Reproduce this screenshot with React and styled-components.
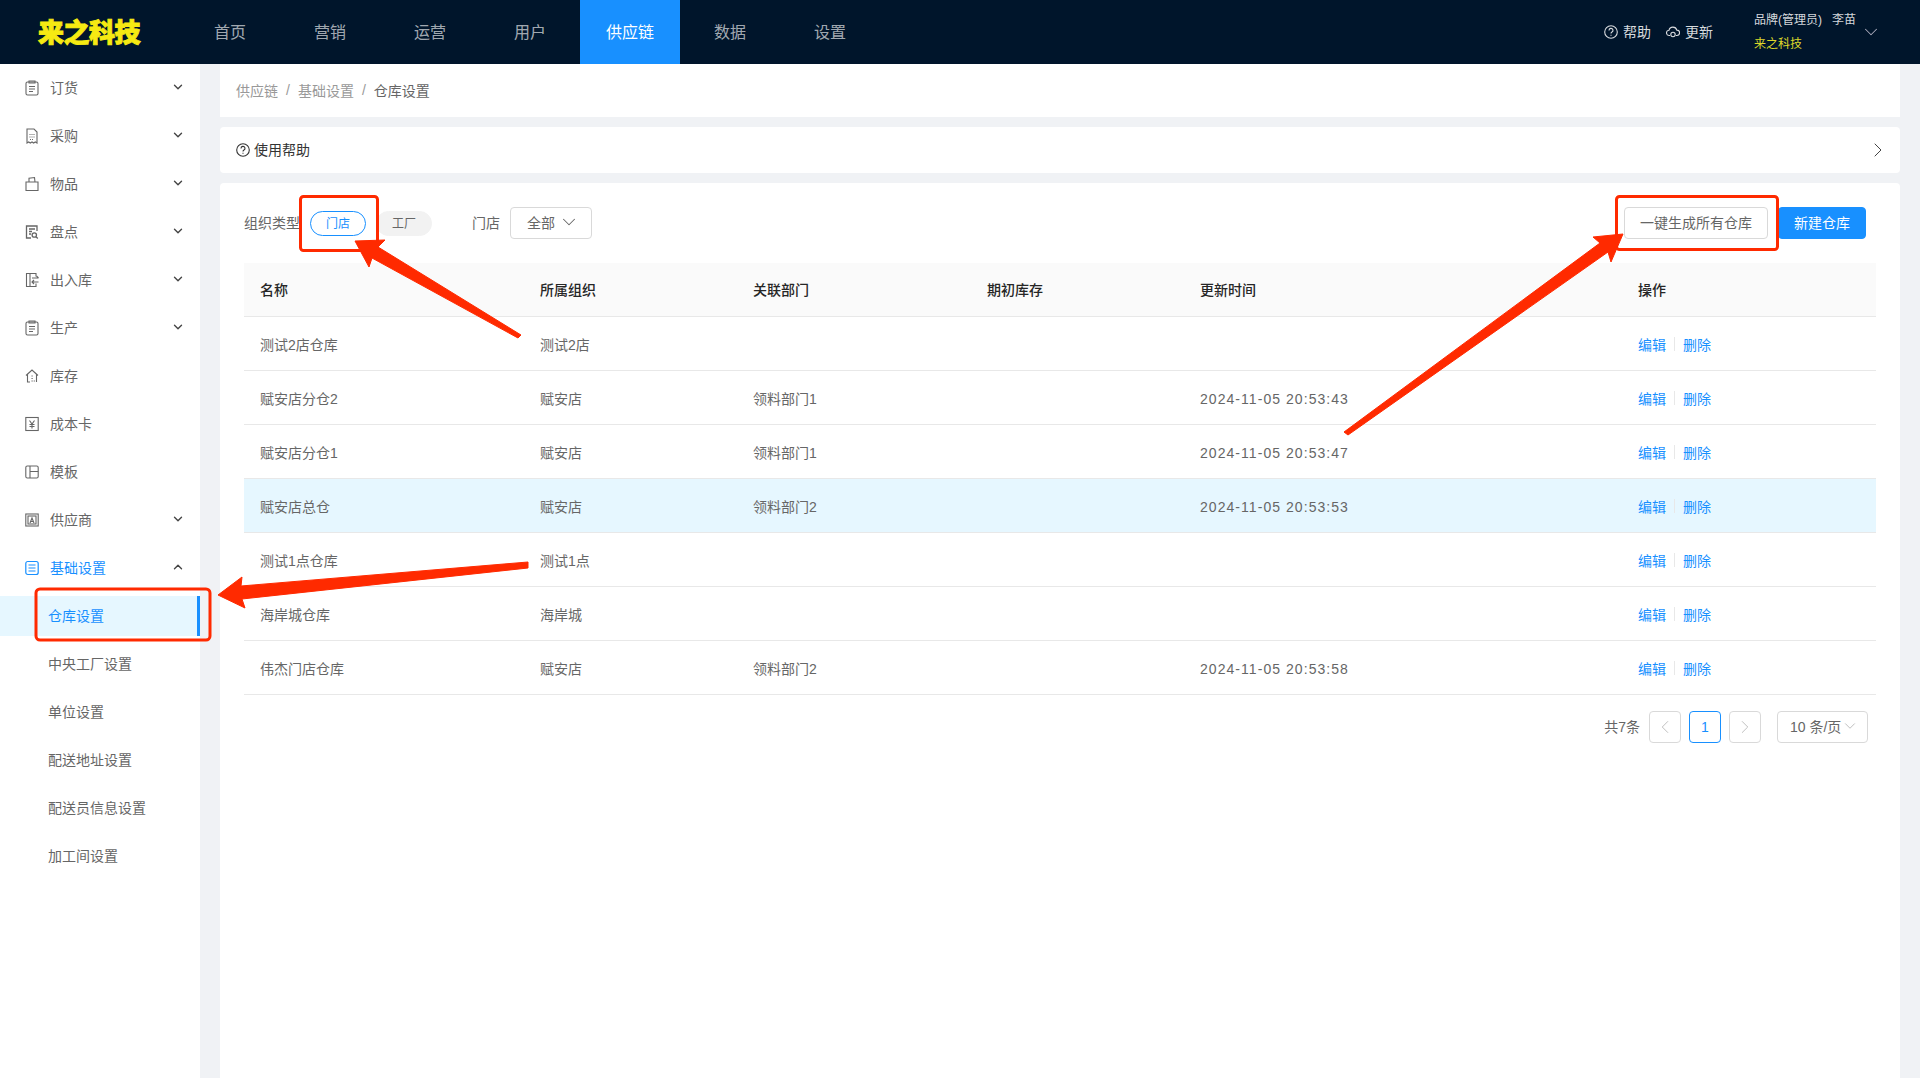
import React from 'react'
import styled, { createGlobalStyle } from 'styled-components'
import { ChevronDown, ChevronUp, ChevronLeft, ChevronRight } from 'lucide-react'

const GlobalStyle = createGlobalStyle`
  * { box-sizing: border-box; }
  html, body { margin: 0; padding: 0; height: 100%; }
  body {
    font-family: "Liberation Sans", "Noto Sans CJK SC", sans-serif;
    font-size: 14px;
    background: #f0f2f5;
  }
`

const Page = styled.div`
  position: relative;
  height: 100vh;
  overflow: hidden;
  display: flex;
  flex-direction: column;
`
const Header = styled.header`
  height: 64px;
  flex: none;
  display: flex;
  align-items: stretch;
  background: #00152b;
`
const Logo = styled.div`
  width: 180px;
  padding: 0 0 3px 38px;
  display: flex;
  align-items: center;
  font-size: 26px;
  font-weight: 900;
  letter-spacing: -0.5px;
  color: #f6ea12;
  -webkit-text-stroke: 0.9px #f6ea12;
`
const NavItem = styled.div`
  width: 100px;
  padding-bottom: 2px;
  display: flex;
  align-items: center;
  justify-content: center;
  font-size: 16px;
  color: ${p => (p.$active ? '#fff' : 'rgba(255,255,255,.65)')};
  background: ${p => (p.$active ? '#1890ff' : 'transparent')};
`
const HeaderRight = styled.div`
  margin-left: auto;
  padding-right: 38px;
  display: flex;
  align-items: center;
  color: rgba(255,255,255,.85);
`
const HeaderLink = styled.div`
  display: flex;
  align-items: center;
  gap: 5px;
  margin-right: 15px;
  padding-bottom: 2px;
  svg { width: 14px; height: 14px; margin-top: 2px; }
`
const User = styled.div`
  margin-left: 26px;
  margin-right: 4px;
  font-size: 12px;
  display: flex;
  flex-direction: column;
  gap: 7px;
  line-height: 17px;
`
const UserName = styled.span`
  display: flex;
  gap: 10px;
`
const Brand = styled.span`
  color: #dcd52a;
`
const Body = styled.div`
  flex: 1;
  display: flex;
  min-height: 0;
`
const Sidebar = styled.aside`
  width: 200px;
  flex: none;
  display: flex;
  flex-direction: column;
  background: #fff;
`
const MenuItem = styled.div`
  height: 48px;
  flex: none;
  padding: 0 15px 2px 25px;
  display: flex;
  align-items: center;
  color: ${p => (p.$open ? '#1890ff' : '#666')};
  svg.icon { width: 14px; height: 16px; margin: 2px 11px 0 0; flex: none; }
  svg.arrow { margin-left: auto; color: #444; }
`
const SubItem = styled.div`
  height: 40px;
  flex: none;
  margin: 4px 0;
  padding: 0 0 2px 48px;
  display: flex;
  align-items: center;
  color: ${p => (p.$active ? '#1890ff' : '#666')};
  background: ${p => (p.$active ? '#e6f7ff' : 'transparent')};
  border-right: ${p => (p.$active ? '3px solid #1890ff' : 'none')};
`
const Main = styled.main`
  flex: 1;
  min-width: 0;
  padding: 0 20px;
  display: flex;
  flex-direction: column;
  gap: 10px;
`
const Breadcrumb = styled.div`
  height: 53px;
  flex: none;
  padding: 0 0 1px 16px;
  display: flex;
  align-items: center;
  background: #fff;
  color: #999;
`
const Sep = styled.span`
  margin: 0 8px;
`
const Current = styled.span`
  color: #666;
`
const HelpBar = styled.div`
  height: 46px;
  flex: none;
  padding: 0 10px 2px 16px;
  display: flex;
  align-items: center;
  gap: 4px;
  background: #fff;
  border-radius: 4px;
  color: #333;
  svg.help { width: 14px; height: 14px; margin-top: 2px; }
  svg.more { margin: 2px 0 0 auto; color: #444; }
`
const Card = styled.section`
  flex: 1;
  padding: 24px;
  background: #fff;
  border-radius: 4px 4px 0 0;
`
const Toolbar = styled.div`
  height: 32px;
  margin-bottom: 24px;
  padding-right: 10px;
  display: flex;
  align-items: center;
  color: #666;
`
const Pill = styled.div`
  width: 56px;
  height: 25px;
  margin-right: 10px;
  padding-bottom: 1px;
  display: flex;
  align-items: center;
  justify-content: center;
  font-size: 12px;
  border-radius: 13px;
  color: ${p => (p.$active ? '#1890ff' : '#666')};
  background: ${p => (p.$active ? '#fff' : '#f2f2f2')};
  border: 1px solid ${p => (p.$active ? '#1890ff' : '#f2f2f2')};
`
const FilterLabel = styled.span`
  margin: -2px 10px 0 ${p => p.$gap || 0}px;
`
const Select = styled.div`
  width: ${p => p.$width}px;
  height: 32px;
  padding: 0 0 2px ${p => p.$pad}px;
  display: flex;
  align-items: center;
  gap: ${p => p.$gap}px;
  border: 1px solid #d9d9d9;
  border-radius: 4px;
  color: #666;
`
const Button = styled.div`
  height: 32px;
  padding-bottom: 2px;
  display: flex;
  align-items: center;
  justify-content: center;
  width: ${p => p.$width}px;
  margin-left: ${p => p.$left};
  border-radius: 4px;
  color: ${p => (p.$primary ? '#fff' : '#666')};
  background: ${p => (p.$primary ? '#1890ff' : '#fff')};
  border: 1px solid ${p => (p.$primary ? '#1890ff' : '#d9d9d9')};
`
const Table = styled.div`
  display: flex;
  flex-direction: column;
`
const Row = styled.div`
  height: 54px;
  padding-bottom: ${p => (p.$head ? '2px' : '0')};
  display: grid;
  grid-template-columns: 280px 213px 234px 213px 438px 254px;
  align-items: center;
  border-bottom: 1px solid #e8e8e8;
  color: ${p => (p.$head ? '#262626' : '#666')};
  font-weight: ${p => (p.$head ? 500 : 400)};
  background: ${p => (p.$head ? '#fafafa' : p.$selected ? '#e6f7ff' : '#fff')};
`
const Cell = styled.div`
  padding-left: 16px;
`
const TimeCell = styled(Cell)`
  padding-top: 2px;
  letter-spacing: 1.05px;
`
const Actions = styled.div`
  padding-left: 16px;
  display: flex;
  align-items: center;
  color: #1890ff;
`
const ActionSep = styled.i`
  width: 1px;
  height: 14px;
  margin: 0 8px;
  background: #e8e8e8;
`
const Pagination = styled.div`
  margin-top: 16px;
  padding-right: 8px;
  display: flex;
  justify-content: flex-end;
  align-items: center;
  color: #666;
`
const Total = styled.span`
  margin: -2px 9px 0 0;
`
const PageBtn = styled.div`
  width: 32px;
  height: 32px;
  margin-right: ${p => p.$gap}px;
  display: flex;
  align-items: center;
  justify-content: center;
  border-radius: 4px;
  border: 1px solid ${p => (p.$active ? '#1890ff' : '#d9d9d9')};
  color: ${p => (p.$active ? '#1890ff' : '#bbb')};
`
const Annotations = styled.svg`
  position: absolute;
  left: 0;
  top: 0;
  pointer-events: none;
`

const line = { fill: 'none', stroke: 'currentColor', strokeWidth: 1.1 }

const Clip = () => (
  <g {...line}>
    <rect x="1" y="2" width="12" height="13" rx="1.5" />
    <path d="M4 1h6v2H4zM4 6.5h6M4 9h6M4 11.5h4" />
  </g>
)
const icons = {
  clip: <Clip />,
  receipt: (
    <g {...line}>
      <path d="M2 1h7l3 3v11l-1.7-1-1.7 1-1.6-1-1.7 1-1.6-1L2 15z" />
      <path d="M4.5 6.5h5M4.5 9h5M5 11.5h4" strokeDasharray="1 1" />
    </g>
  ),
  bag: (
    <g {...line}>
      <path d="M1 6h12v8.5H1zM4 6V2.2L9.5 1.5 10 6" />
    </g>
  ),
  audit: (
    <g {...line} strokeWidth="1.3">
      <path d="M12 7V2H1.5v12H6" />
      <path d="M4 5h6M4 7.5h3M4 10h2" />
      <circle cx="9.3" cy="11" r="2.2" />
      <path d="M11 12.8l1.8 1.7" />
    </g>
  ),
  inout: (
    <g {...line}>
      <path d="M11 4.5V1.5H1.5v13H11v-3" />
      <path d="M5 1.5v13M7 6h6.5M11.5 4l2 2M13.5 10H7M9 8l-2 2 2 2" />
    </g>
  ),
  house: (
    <g {...line}>
      <path d="M1 7.5 7 2l6 5.5M2.5 6.5V14h2.5M11.5 6.5V14" />
      <path d="M6.5 8h1.5M6.5 10.5h1.5M6.5 13h4" strokeDasharray="1.2 1" />
    </g>
  ),
  yen: (
    <g {...line}>
      <rect x="0.8" y="1.5" width="12.4" height="13" />
      <path d="M4.5 4.5 7 8l2.5-3.5M7 8v4.5M4.5 8.5h5M4.5 10.5h5" />
    </g>
  ),
  layout: (
    <g {...line}>
      <rect x="0.8" y="2" width="12.4" height="12" rx="1.5" />
      <path d="M5 2v12M5 7.5h8.2" />
    </g>
  ),
  supplier: (
    <g {...line}>
      <rect x="0.8" y="2" width="12.4" height="12" />
      <rect x="3" y="4" width="8" height="8" />
      <path d="M5 11l2-5 2 5M5.5 9.5h3" />
    </g>
  ),
  list: (
    <g {...line} strokeWidth="1.2">
      <rect x="0.8" y="1.5" width="12.4" height="13" rx="2" />
      <path d="M3.5 5h7M3.5 8h7M3.5 11h7" />
    </g>
  ),
}

const menu = [
  ['订货', 'clip', true],
  ['采购', 'receipt', true],
  ['物品', 'bag', true],
  ['盘点', 'audit', true],
  ['出入库', 'inout', true],
  ['生产', 'clip', true],
  ['库存', 'house', false],
  ['成本卡', 'yen', false],
  ['模板', 'layout', false],
  ['供应商', 'supplier', true],
]
const subMenu = ['仓库设置', '中央工厂设置', '单位设置', '配送地址设置', '配送员信息设置', '加工间设置']
const navs = ['首页', '营销', '运营', '用户', '供应链', '数据', '设置']
const columns = ['名称', '所属组织', '关联部门', '期初库存', '更新时间', '操作']
const rows = [
  ['测试2店仓库', '测试2店', '', ''],
  ['赋安店分仓2', '赋安店', '领料部门1', '2024-11-05 20:53:43'],
  ['赋安店分仓1', '赋安店', '领料部门1', '2024-11-05 20:53:47'],
  ['赋安店总仓', '赋安店', '领料部门2', '2024-11-05 20:53:53'],
  ['测试1点仓库', '测试1点', '', ''],
  ['海岸城仓库', '海岸城', '', ''],
  ['伟杰门店仓库', '赋安店', '领料部门2', '2024-11-05 20:53:58'],
]

const HelpIcon = ({ className }) => (
  <svg className={className} viewBox="0 0 14 14" fill="none" stroke="currentColor" strokeWidth="1.1">
    <circle cx="7" cy="7" r="6.3" />
    <path d="M5 5.4a2 2 0 1 1 3 1.7c-.7.4-1 .8-1 1.5" />
    <path d="M7 9.8v1" />
  </svg>
)

const CloudIcon = () => (
  <svg viewBox="0 0 14 14" fill="none" stroke="currentColor" strokeWidth="1.1">
    <path d="M4 10.5H3.2a2.6 2.6 0 0 1-.2-5.2 4 4 0 0 1 7.8-.2 2.7 2.7 0 0 1 .2 5.4H10" />
    <circle cx="7" cy="9.5" r="2.2" />
  </svg>
)

function App() {
  return (
    <Page>
      <GlobalStyle />
      <Header>
        <Logo>来之科技</Logo>
        {navs.map(n => (
          <NavItem key={n} $active={n === '供应链'}>{n}</NavItem>
        ))}
        <HeaderRight>
          <HeaderLink><HelpIcon />帮助</HeaderLink>
          <HeaderLink><CloudIcon />更新</HeaderLink>
          <User>
            <UserName><span>品牌(管理员)</span><span>李苗</span></UserName>
            <Brand>来之科技</Brand>
          </User>
          <ChevronDown size={22} strokeWidth={1.1} color="#aab" />
        </HeaderRight>
      </Header>
      <Body>
        <Sidebar>
          {menu.map(([label, icon, arrow]) => (
            <MenuItem key={label}>
              <svg className="icon" viewBox="0 0 14 16">{icons[icon]}</svg>
              {label}
              {arrow && <ChevronDown className="arrow" size={14} strokeWidth={2.4} />}
            </MenuItem>
          ))}
          <MenuItem $open>
            <svg className="icon" viewBox="0 0 14 16">{icons.list}</svg>
            基础设置
            <ChevronUp className="arrow" size={14} strokeWidth={2.4} />
          </MenuItem>
          {subMenu.map((s, i) => (
            <SubItem key={s} $active={i === 0}>{s}</SubItem>
          ))}
        </Sidebar>
        <Main>
          <Breadcrumb>
            供应链<Sep>/</Sep>基础设置<Sep>/</Sep><Current>仓库设置</Current>
          </Breadcrumb>
          <HelpBar>
            <HelpIcon className="help" />
            使用帮助
            <ChevronRight className="more" size={24} strokeWidth={1} />
          </HelpBar>
          <Card>
            <Toolbar>
              <FilterLabel>组织类型</FilterLabel>
              <Pill $active>门店</Pill>
              <Pill>工厂</Pill>
              <FilterLabel $gap={30}>门店</FilterLabel>
              <Select $width={82} $pad={16} $gap={3}>
                全部<ChevronDown size={22} strokeWidth={1.1} />
              </Select>
              <Button $width={144} $left="auto">一键生成所有仓库</Button>
              <Button $width={88} $left="10px" $primary>新建仓库</Button>
            </Toolbar>
            <Table>
              <Row $head>
                {columns.map(c => <Cell key={c}>{c}</Cell>)}
              </Row>
              {rows.map((r, i) => (
                <Row key={r[0]} $selected={i === 3}>
                  <Cell>{r[0]}</Cell>
                  <Cell>{r[1]}</Cell>
                  <Cell>{r[2]}</Cell>
                  <Cell />
                  <TimeCell>{r[3]}</TimeCell>
                  <Actions>编辑<ActionSep />删除</Actions>
                </Row>
              ))}
            </Table>
            <Pagination>
              <Total>共7条</Total>
              <PageBtn $gap={8}><ChevronLeft size={22} strokeWidth={1} /></PageBtn>
              <PageBtn $gap={8} $active>1</PageBtn>
              <PageBtn $gap={16}><ChevronRight size={22} strokeWidth={1} /></PageBtn>
              <Select $width={91} $pad={12} $gap={0}>
                10 条/页<ChevronDown size={18} strokeWidth={1} color="#aaa" />
              </Select>
            </Pagination>
          </Card>
        </Main>
      </Body>
      <Annotations width="1920" height="1078" viewBox="0 0 1920 1078">
        <g fill="none" stroke="#ff2a00" strokeWidth="3">
          <rect x="300.5" y="196.5" width="77" height="54" rx="3" />
          <rect x="1616.5" y="196.5" width="161" height="53" rx="3" />
          <rect x="36" y="589" width="174" height="51" rx="4" />
        </g>
        <g fill="#ff2a00" stroke="#ff2a00" strokeWidth="1" strokeLinejoin="round">
          <polygon points="355,241 385,240 378,247 521,335 518,338 372,258 369,267" />
          <polygon points="1623,234 1593,237 1600,243 1344,432 1348,435 1608,252 1611,262" />
          <polygon points="218,595 242,577 241,586 528,562 528,568 242,599 245,608" />
        </g>
      </Annotations>
    </Page>
  )
}

export default App
